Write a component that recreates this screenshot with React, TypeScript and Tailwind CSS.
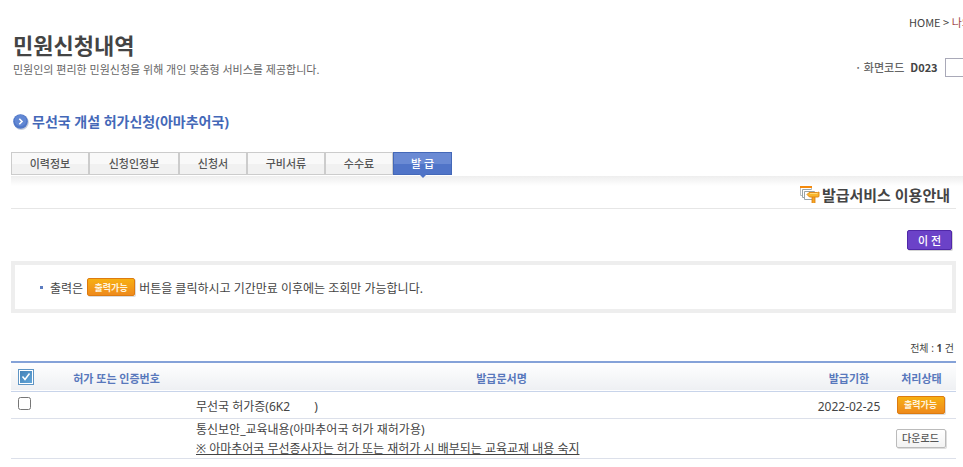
import { useState } from "react";
import clsx from "clsx";

const tabs = ["이력정보", "신청인정보", "신청서", "구비서류", "수수료", "발 급"];

function ArrowBullet() {
  return (
    <svg className="w-4 h-4" viewBox="0 0 16 16" fill="none" aria-hidden="true">
      <circle cx="8.3" cy="8.5" r="7.5" fill="#c9cfdc" />
      <circle cx="7.5" cy="7.5" r="7.3" fill="#5078c8" />
      <circle cx="7.5" cy="6.5" r="5.8" fill="#6288d4" />
      <path d="M6.3 4.8L9 7.5l-2.7 2.7" stroke="#fff" strokeWidth="1.6" />
    </svg>
  );
}

function GuideIcon() {
  return (
    <svg className="w-5 h-[18px]" viewBox="0 0 20 18" aria-hidden="true">
      <path d="M.5 1v8.5H3M.5 9V1h11v3" fill="#fff" stroke="#b9c0c3" />
      <path d="M0 0h12v2H0z" fill="#f58a0c" />
      <path d="M11 3.5H2.5v8H4" fill="#fff" stroke="#98a4a8" />
      <path d="M4.500 5.500h10v8h-10z" fill="#fff" stroke="#98a4a8" />
      <path d="M12 10.500h3V17h-3z" fill="#f5a623" />
      <path d="M12 11v6M15 11v6" stroke="#d57a10" strokeWidth=".8" />
      <path d="M7 8.500l2-2h8.500l1.500-.5v4.500l-1 .5H9.500z" fill="#f8b62d" stroke="#dc8412" strokeWidth=".9" />
      <path d="M10 7.500h7.500" stroke="#ffd978" />
    </svg>
  );
}

function PrintButton() {
  return (
    <button
      type="button"
      className="h-[18px] w-12 rounded-xs border border-[#dd7b10] bg-linear-to-b from-[#f7b012] to-[#ee8a1c] text-[9px] leading-none font-bold text-[#fff3dc] shadow-[1px_1px_0_#dcdcdc]"
    >
      출력가능
    </button>
  );
}

export default function App() {
  const [activeTab, setActiveTab] = useState("발 급");
  const [allChecked, setAllChecked] = useState(true);
  const [rowChecked, setRowChecked] = useState(false);

  return (
    <div className="overflow-hidden bg-white pl-[11px] font-['Noto_Sans','Noto_Sans_CJK_KR',sans-serif] text-xs text-[#444]">
      <header className="flex justify-between pt-3.5">
        <div className="pt-3.5 pl-0.5">
          <h1 className="text-[22px] leading-[34px] font-bold text-[#444]">민원신청내역</h1>
          <p className="text-[11px] leading-4 text-[#666]">
            민원인의 편리한 민원신청을 위해 개인 맞춤형 서비스를 제공합니다.
          </p>
        </div>
        <div className="w-[108px] font-['Noto_Sans_CJK_KR','Noto_Sans',sans-serif] whitespace-nowrap">
          <nav className="pl-[54px] text-[11px] leading-4" aria-label="현재 위치">
            <a href="#home">HOME</a> &gt; <a href="#my" className="text-[#a04848]">나의</a>
          </nav>
          <div className="mt-7 flex items-center text-[11px]">
            <label htmlFor="screen-code" className="font-medium text-[#666]">· 화면코드</label>
            <strong className="ml-1.5">D023</strong>
            <input id="screen-code" className="ml-[7px] h-[19px] w-16 shrink-0 border border-[#a9a9b8] px-1 outline-none" />
          </div>
        </div>
      </header>

      <h2 className="mt-8 flex items-center gap-[3px] pl-0.5 text-sm leading-6 font-bold text-[#4468b8]">
        <ArrowBullet />
        무선국 개설 허가신청(아마추어국)
      </h2>

      <div className="mt-[18px] flex" role="tablist">
        {tabs.map((tab) => (
          <button
            key={tab}
            type="button"
            role="tab"
            aria-selected={tab === activeTab}
            onClick={() => setActiveTab(tab)}
            className={clsx(
              "relative h-[23px] border px-[17px] text-[11px] leading-none font-medium",
              tab === activeTab
                ? "border-[#4468b8] bg-linear-to-b from-[#6a8ad4] from-50% to-[#5074c8] to-50% text-white"
                : "min-w-[68px] border-[#ccc] bg-linear-to-b from-[#f9f9f9] from-50% to-[#f1f1f1] to-50% text-[#555]",
              tab.length === 4 && "min-w-[78px]",
              tab.length === 5 && "min-w-[90px]"
            )}
          >
            {tab}
            {tab === activeTab && (
              <svg className="absolute top-full left-1/2 h-1 w-2 -translate-x-1/2" viewBox="0 0 8 4" aria-hidden="true">
                <path d="M0 0h8L4 4z" fill="#4f73c6" />
              </svg>
            )}
          </button>
        ))}
      </div>
      <div className="mt-px h-2.5 bg-linear-to-b from-[#eee] to-white" />

      <main className="pr-[7px]">
        <h3 className="flex h-[23px] items-center justify-end gap-0.5 border-b border-[#e6e6e6] pr-1.5 pb-1 text-[15px] leading-5 font-bold">
          <GuideIcon />
          발급서비스 이용안내
        </h3>

        <div className="mt-[21px] flex justify-end pr-1">
          <button
            type="button"
            className="h-5 w-[45px] rounded-xs border border-[#5028a8] bg-[#6b42c8] text-[11px] leading-none font-medium text-white shadow-[1px_1px_0_#d4d4d4]"
          >
            이 전
          </button>
        </div>

        <div className="mt-[11px] flex h-[52px] items-center gap-1 border-4 border-[#eee] pl-[25px]">
          <span className="mr-[3px] h-[3px] w-[3px] bg-[#5c7cc0]" />
          <p className="pt-1">출력은</p>
          <PrintButton />
          <p className="pt-1">버튼을 클릭하시고 기간만료 이후에는 조회만 가능합니다.</p>
        </div>

        <p className="mt-[27px] pr-0.5 text-right text-[10px] leading-4">
          전체 : <strong>1</strong> 건
        </p>

        <table className="mt-[5px] w-full table-fixed border-t-2 border-[#85a2d8]">
          <colgroup>
            <col className="w-[30px]" />
            <col className="w-[151px]" />
            <col />
            <col className="w-[76px]" />
            <col className="w-[69px]" />
          </colgroup>
          <thead>
            <tr className="h-[29px] border-b border-[#c8d4ea] bg-linear-to-b from-white to-[#eef0f3] text-[11px] text-[#5878bc]">
              <th className="p-0 pt-px">
                <label className="ml-[7px] grid h-4 w-4 place-items-center border border-[#5f95c4] bg-white p-px">
                  <input
                    type="checkbox"
                    aria-label="전체 선택"
                    checked={allChecked}
                    onChange={(e) => setAllChecked(e.target.checked)}
                    className="col-start-1 row-start-1 h-3 w-3 appearance-none bg-linear-to-br from-[#4583b8] to-[#62a5d8]"
                  />
                  {allChecked && (
                    <svg className="pointer-events-none col-start-1 row-start-1 h-3 w-3" viewBox="0 0 12 12" fill="none" aria-hidden="true">
                      <path d="M2.500 5.500l2.500 3 4.500-6" stroke="#fff" strokeWidth="1.500" />
                    </svg>
                  )}
                </label>
              </th>
              <th className="p-0 pt-1.5">허가 또는 인증번호</th>
              <th className="p-0 pt-1.5">발급문서명</th>
              <th className="p-0 pt-1.5">발급기한</th>
              <th className="p-0 pt-1.5">처리상태</th>
            </tr>
          </thead>
          <tbody>
            <tr className="h-[27px] border-b border-[#dce0ea]">
              <td className="p-0">
                <input
                  type="checkbox"
                  aria-label="무선국 허가증 선택"
                  checked={rowChecked}
                  onChange={(e) => setRowChecked(e.target.checked)}
                  className="mb-0.5 ml-[7px] block h-[13px] w-[13px]"
                />
              </td>
              <td />
              <td className="p-0 pt-1 pl-1">
                무선국 허가증(6K2<span className="inline-block w-6" />)
              </td>
              <td className="p-0 pt-1 text-center">2022-02-25</td>
              <td className="p-0 pr-0.5">
                <div className="flex justify-center"><PrintButton /></div>
              </td>
            </tr>
            <tr className="h-[39px] border-b border-[#dce0ea]">
              <td />
              <td />
              <td className="p-0 pt-px pl-1 leading-[19px]">
                통신보안_교육내용(아마추어국 허가 재허가용)
                <br />
                <u>※ 아마추어국 무선종사자는 허가 또는 재허가 시 배부되는 교육교재 내용 숙지</u>
              </td>
              <td />
              <td className="p-0 pr-0.5">
                <div className="flex justify-center">
                  <button
                    type="button"
                    className="h-[19px] w-[50px] rounded-xs border border-[#bbb] bg-linear-to-b from-white to-[#f3f3f3] text-[10px] leading-none font-medium text-[#555] shadow-[1px_1px_0_#ddd]"
                  >
                    다운로드
                  </button>
                </div>
              </td>
            </tr>
          </tbody>
        </table>
      </main>
    </div>
  );
}
